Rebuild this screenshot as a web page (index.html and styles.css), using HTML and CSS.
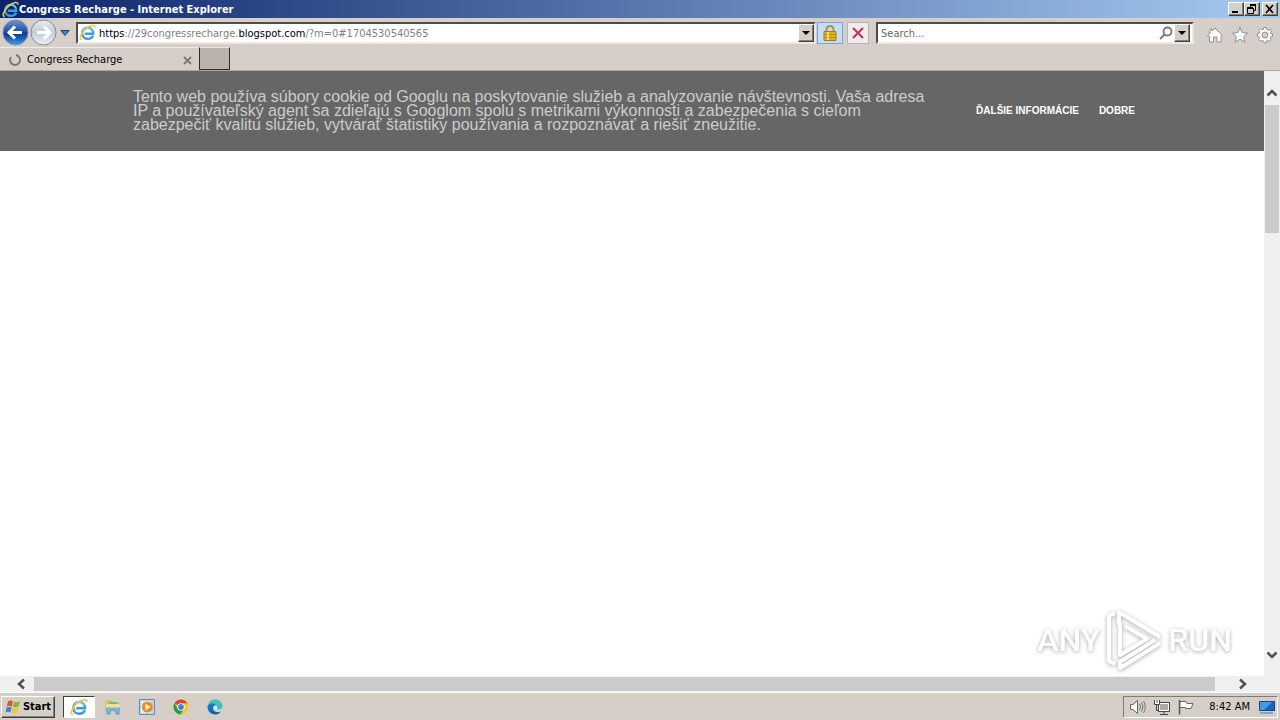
FILE: index.html
```html
<!DOCTYPE html>
<html lang="en">
<head>
<meta charset="utf-8">
<title>Congress Recharge - Internet Explorer</title>
<link rel="stylesheet" href="styles.css">
</head>
<body>
<svg class="defs" aria-hidden="true">
  <defs>
    <linearGradient id="blueBall" x1="0" y1="0" x2="0" y2="1"><stop offset="0" stop-color="#6d94d2"/><stop offset=".48" stop-color="#1d4da8"/><stop offset=".55" stop-color="#0c3a94"/><stop offset="1" stop-color="#37a2ee"/></linearGradient>
    <linearGradient id="greyBall" x1="0" y1="0" x2="0" y2="1"><stop offset="0" stop-color="#e9edf2"/><stop offset=".5" stop-color="#c3cbd6"/><stop offset="1" stop-color="#eef2f7"/></linearGradient>
    <linearGradient id="edgeFill" x1="0" y1="0" x2="1" y2="1"><stop offset="0" stop-color="#1683d8"/><stop offset="1" stop-color="#0c4fa0"/></linearGradient>
    <symbol id="ie" viewBox="0 0 16 16">
      <path d="M13.300 11C12.300 13 10.600 14 8.300 14C5.100 14 3 11.800 3 8.800C3 5.700 5.200 3.500 8.400 3.500C11.600 3.500 13.500 5.800 13.400 9.200H5.500" fill="none" stroke="#3a9ce0" stroke-width="2.200"/>
      <path d="M3.600 7C4.500 4.800 6 3.600 8.400 3.500C10.800 3.500 12.400 4.700 13 6.500" fill="none" stroke="#8fd3f7" stroke-width="1.100"/>
      <path d="M2.600 14.700C-.500 14.700 1.700 8.700 6.500 4.600C10.700 1 15.200 .100 15 3.500" fill="none" stroke="#f1c63a" stroke-width="1.500"/>
    </symbol>
  </defs>
</svg>

<header class="titlebar">
  <svg class="title-icon" viewBox="0 0 16 16"><use href="#ie"/></svg>
  <h1 class="title-text">Congress Recharge - Internet Explorer</h1>
  <div class="window-buttons">
    <button class="bevel win-btn" aria-label="Minimize"><svg viewBox="0 0 12 10"><path d="M2 8H8" stroke="#000" stroke-width="2"/></svg></button>
    <button class="bevel win-btn" aria-label="Restore"><svg viewBox="0 0 12 10"><path d="M4 1H10M1 4H7" stroke="#000" stroke-width="2"/><path d="M4.500 2V4M9.500 1V6.500H7.500M1.500 4V9.500H7.500V4" fill="none" stroke="#000"/></svg></button>
    <button class="bevel win-btn win-close" aria-label="Close"><svg viewBox="0 0 12 10"><path d="M2 1L9 9M9 1L2 9" stroke="#000" stroke-width="1.700"/></svg></button>
  </div>
</header>

<nav class="navbar">
  <div class="history">
    <button class="plain" aria-label="Back"><svg class="ball" viewBox="0 0 27 27"><circle cx="13.500" cy="13.500" r="12.500" fill="url(#blueBall)" stroke="#7b8ba5"/><path d="M20 13.500H7.500M13 7.500L7 13.500L13 19.500" fill="none" stroke="#fff" stroke-width="3"/></svg></button>
    <button class="plain" aria-label="Forward"><svg class="ball" viewBox="0 0 27 27"><circle cx="13.500" cy="13.500" r="12.500" fill="url(#greyBall)" stroke="#858b94"/><path d="M7 13.500H19.500M14 7.500L20 13.500L14 19.500" fill="none" stroke="#fff" stroke-width="3"/></svg></button>
    <button class="plain recent" aria-label="Recent pages"><svg viewBox="0 0 10 8"><path d="M.800 1.500H9.200L5 6.500Z" fill="#3a87c4" stroke="#15446f"/></svg></button>
  </div>
  <div class="field address">
    <svg class="field-icon" viewBox="0 0 16 16"><use href="#ie"/></svg>
    <div class="url" role="textbox" aria-label="Address" contenteditable="true" spellcheck="false"><b>https</b>://29congressrecharge.<b>blogspot.com</b>/?m=0#1704530540565</div>
    <button class="bevel drop" aria-label="Show addresses"><svg viewBox="0 0 8 4"><path d="M0 0H8L4 4Z"/></svg></button>
  </div>
  <button class="tool lock" aria-label="Security report"><svg viewBox="0 0 16 18"><path d="M4.500 9V5.500C4.500 .800 11.500 .800 11.500 5.500V9" fill="none" stroke="#a79558" stroke-width="2"/><path d="M2 7.500H14V16.500H2Z" fill="#e5b020" stroke="#a87910"/><path d="M2.500 10.500H13.500M2.500 13.500H13.500" stroke="#b9830b"/><path d="M5 8H7V16H5Z" fill="#f7d765"/></svg></button>
  <button class="tool stop" aria-label="Stop"><svg viewBox="0 0 16 18"><path d="M3 4L13 14M13 4L3 14" stroke="#c33342" stroke-width="2"/></svg></button>
  <div class="field search">
    <input class="search-input" type="text" placeholder="Search..." aria-label="Search">
    <button class="plain magnifier" aria-label="Go"><svg viewBox="0 0 14 14"><circle cx="8.500" cy="5.500" r="4" fill="none" stroke="#777" stroke-width="1.800"/><path d="M5.500 8.500L1 13" stroke="#777" stroke-width="2"/></svg></button>
    <button class="bevel drop" aria-label="Search providers"><svg viewBox="0 0 8 4"><path d="M0 0H8L4 4Z"/></svg></button>
  </div>
  <div class="commands">
    <button class="plain" aria-label="Home"><svg viewBox="0 0 18 18"><path d="M9 2L16.500 9.500L15 10.500V16H11V11H7.500V16H3.500V10.500L1.500 9.500L4 7V3H6V5Z" fill="#fff" stroke="#8f8f8f"/></svg></button>
    <button class="plain" aria-label="Favorites"><svg viewBox="0 0 18 18"><path d="M9 1.500L11.200 6.700L16.700 7.100L12.500 10.700L13.900 16.200L9 13.200L4.100 16.200L5.500 10.700L1.300 7.100L6.800 6.700Z" fill="#fff" stroke="#8f8f8f"/></svg></button>
    <button class="plain" aria-label="Tools"><svg viewBox="0 0 18 18"><path d="M7.700 1.500H10.300L10.700 3.500L12.300 4.200L14 3.200L15.500 5L14.400 6.600L15 8H16.500V10.500L14.800 10.800L14.200 12.200L15.200 13.800L13.500 15.500L12 14.400L10.500 15L10.200 16.700H7.800L7.400 15L5.900 14.400L4.300 15.400L2.600 13.700L3.600 12.200L3 10.700L1.400 10.300V7.900L3.100 7.500L3.700 6L2.700 4.500L4.400 2.800L5.900 3.800L7.400 3.200Z" fill="#fff" stroke="#8f8f8f"/><circle cx="9" cy="9" r="3" fill="#d4d0c8" stroke="#8f8f8f"/></svg></button>
  </div>
</nav>

<div class="tabs">
  <div class="tab">
    <svg class="spinner" viewBox="0 0 14 14"><path d="M8 2A5 5 0 1 1 3 4" fill="none" stroke="#777" stroke-width="2"/></svg>
    <span class="tab-name">Congress Recharge</span>
    <button class="plain tab-close" aria-label="Close tab"><svg viewBox="0 0 9 9"><path d="M1 1L8 8M8 1L1 8" stroke="#777" stroke-width="1.800"/></svg></button>
  </div>
  <button class="new-tab" aria-label="New tab"></button>
</div>

<div class="viewport">
  <main class="page" lang="sk">
    <section class="cookies">
      <p class="cookie-text">Tento web používa súbory cookie od Googlu na poskytovanie služieb a analyzovanie návštevnosti. Vaša adresa IP a používateľský agent sa zdieľajú s Googlom spolu s metrikami výkonnosti a zabezpečenia s cieľom zabezpečiť kvalitu služieb, vytvárať štatistiky používania a rozpoznávať a riešiť zneužitie.</p>
      <div class="cookie-links"><a href="#info">ĎALŠIE INFORMÁCIE</a><a href="#ok">DOBRE</a></div>
    </section>
    <div class="watermark">
      <span>ANY</span>
      <svg viewBox="0 0 58 64"><g fill="none" stroke="#fff" stroke-width="4" stroke-linejoin="round"><path d="M10 5L4 8V53L10 56"/><path d="M15 14V47L42 31L20 18"/><path d="M14 18V4L55 29"/><path d="M55 35L15 60V54L50 32"/></g></svg>
      <span>RUN</span>
    </div>
  </main>
  <div class="vscroll">
    <button class="plain arrow-v" aria-label="Scroll up"><svg viewBox="0 0 12 10"><path d="M1.500 7.500L6 3L10.500 7.500" fill="none" stroke="#505050" stroke-width="2.500"/></svg></button>
    <div class="vtrack"><div class="vthumb"></div></div>
    <button class="plain arrow-v" aria-label="Scroll down"><svg viewBox="0 0 12 10"><path d="M1.500 2.500L6 7L10.500 2.500" fill="none" stroke="#505050" stroke-width="2.500"/></svg></button>
  </div>
  <div class="hscroll">
    <button class="plain arrow-h" aria-label="Scroll left"><svg viewBox="0 0 10 12"><path d="M8 1.500L3 6L8 10.500" fill="none" stroke="#505050" stroke-width="2.500"/></svg></button>
    <div class="hthumb"></div>
    <button class="plain arrow-h" aria-label="Scroll right"><svg viewBox="0 0 10 12"><path d="M2 1.500L7 6L2 10.500" fill="none" stroke="#505050" stroke-width="2.500"/></svg></button>
  </div>
  <div class="corner"></div>
</div>

<footer class="taskbar">
  <button class="bevel start"><svg viewBox="0 0 17 16"><path d="M3 2.500Q5.500 .500 8 2.300L6.800 7.500Q4.300 6 1.800 7.500Z" fill="#e65125"/><path d="M9 2.500Q11.500 4 15 2.300L13.700 7.500Q11 9 7.900 7.600Z" fill="#80b93b"/><path d="M1.500 8.500Q4 7 6.600 8.500L5.400 13.500Q3 12 .500 13.500Z" fill="#318bd2"/><path d="M7.600 8.600Q10.500 10 13.500 8.500L12.200 13.500Q9.300 15.500 6.400 13.700Z" fill="#f6c62f"/></svg>Start</button>
  <div class="apps">
    <button class="app active" aria-label="Internet Explorer"><svg viewBox="0 0 16 16"><use href="#ie"/></svg></button>
    <button class="app" aria-label="Explorer"><svg viewBox="0 0 16 16"><path d="M1 2H6L7 4H14V12H1Z" fill="#efd583" stroke="#d3ad52"/><path d="M3 4H12" stroke="#62b979" stroke-width="1.500"/><path d="M2 8H14V15H11V11H5V15H2Z" fill="#79bce4" stroke="#549bc7"/><path d="M1 7H15" stroke="#f6e39b" stroke-width="3"/></svg></button>
    <button class="app" aria-label="Media Player"><svg viewBox="0 0 16 16"><path d="M.500 .500H15.500V15.500H.500Z" fill="#b9d5ed" stroke="#5b91c2"/><path d="M2 2H12V14H2Z" fill="#e6f2fb"/><circle cx="8.300" cy="8" r="5.500" fill="#f28b1c"/><path d="M6.500 4.800L11.500 8L6.500 11.200Z" fill="#fff"/></svg></button>
    <button class="app" aria-label="Chrome"><svg viewBox="0 0 16 16"><circle cx="8" cy="8" r="7.500" fill="#f7c927"/><path d="M8 8L1.500 4.200A7.500 7.500 0 0 1 14.500 4.300L8 4.500Z" fill="#dc4132"/><path d="M1.500 4.200A7.500 7.500 0 0 0 7.500 15.500L11 9.700L8 8L5 9.700Z" fill="#269b50"/><circle cx="8" cy="8" r="3.800" fill="#fff"/><circle cx="8" cy="8" r="2.900" fill="#417fe5"/></svg></button>
    <button class="app" aria-label="Edge"><svg viewBox="0 0 16 16"><path d="M.500 8A7.500 7.500 0 0 1 15.500 7.500C15.500 10.500 12 11.500 9.500 10.500C10.500 9.500 10.500 6.500 7.500 6C4 5.500 1 7 .500 9Z" fill="#43c3b3"/><path d="M.500 8C1 4.500 6 3 9 6.200C7 6 5.500 7.500 6 10C6.600 13 10.500 14 14 12.500A7.500 7.500 0 0 1 .500 8Z" fill="url(#edgeFill)"/><path d="M8.800 6.500C7 7 7 10.500 10.500 11.200C13 11.600 14.500 10.700 15.300 9.500C13.500 11 11 11 9.800 10.300C10.300 9.500 10.400 7.500 8.800 6.500Z" fill="#e4edeb"/></svg></button>
  </div>
  <div class="tray">
    <svg viewBox="0 0 18 16"><path d="M1.500 5.500H4L8.500 1.500V14.500L4 10.500H1.500Z" fill="#fff" stroke="#666"/><path d="M10.500 5Q12.500 8 10.500 11M12.500 3.500Q15.500 8 12.500 12.500M14.500 2Q18 8 14.500 14" fill="none" stroke="#777"/></svg>
    <svg viewBox="0 0 18 16"><path d="M5.500 3.500H16.500V12.500H5.500Z" fill="#fff" stroke="#444"/><path d="M7 5H15V11H7Z" fill="#aaa"/><path d="M11 13V15M7 15.500H15M3.500 6V11.500H5" fill="none" stroke="#444"/><path d="M1.500 1V5.500H6.500V1M4 1V4" fill="#fff" stroke="#444"/></svg>
    <svg viewBox="0 0 18 16"><path d="M2.500 1V15.500" stroke="#555" stroke-width="1.500"/><path d="M3 2.500H9L10 4.500H16L14 9.500H8.500V8.500H3Z" fill="#fff" stroke="#666"/></svg>
    <time class="clock">8:42 AM</time>
    <svg viewBox="0 0 18 16"><path d="M1.500 2.500H16.500V11.500H1.500Z" fill="#1765bd" stroke="#154680"/><path d="M2 3H14L6 11H2Z" fill="#4599e5"/><path d="M2 14H15" stroke="#85a5c5" stroke-width="2"/></svg>
  </div>
</footer>
</body>
</html>
```
FILE: styles.css
```css
* { box-sizing: border-box; }
body {
  margin: 0;
  height: 100vh;
  display: flex;
  flex-direction: column;
  overflow: hidden;
  background: #d6cfc9;
  color: #000;
  font: 11px/14px Tahoma, "DejaVu Sans Condensed", "DejaVu Sans", sans-serif;
}
button { font: inherit; color: inherit; padding: 0; margin: 0; border-radius: 0; }
svg { display: block; }
.defs { position: absolute; width: 0; height: 0; }
.plain { border: 0; background: none; }
.bevel {
  display: flex;
  align-items: center;
  justify-content: center;
  background: #d4d0c8;
  border: 1px solid;
  border-color: #fff #404040 #404040 #fff;
  box-shadow: inset -1px -1px #858078;
}

.titlebar {
  display: flex;
  align-items: center;
  height: 18px;
  flex: none;
  padding: 0 2px;
  background: linear-gradient(90deg, #0a246a, #a6caf0);
}
.title-icon { width: 17px; height: 17px; }
.title-text { flex: 1; margin: 0; padding-top: 2px; font-size: 11px; font-weight: bold; color: #fff; }
.window-buttons { display: flex; }
.win-btn { width: 16px; height: 14px; }
.win-btn svg { width: 12px; height: 10px; }
.win-close { margin-left: 2px; }

.navbar { display: flex; align-items: center; height: 29px; flex: none; padding: 0 6px 0 2px; }
.history { display: flex; align-items: center; width: 74px; gap: 1px; }
.ball { width: 27px; height: 27px; }
.recent { margin-left: 2px; }
.recent svg { width: 10px; height: 8px; }
.field {
  display: flex;
  align-items: center;
  height: 22px;
  background: #fff;
  border: 2px solid;
  border-color: #514b49 #ece7e2 #ece7e2 #514b49;
}
.address { flex: 1; }
.field-icon { width: 17px; height: 17px; margin: 0 3px 0 1px; }
.url { flex: 1; padding-top: 2px; color: #808080; white-space: nowrap; outline: 0; }
.url b { font-weight: normal; color: #000; }
.drop { width: 16px; height: 18px; }
.drop svg { width: 8px; height: 4px; }
.tool { display: flex; align-items: center; justify-content: center; height: 22px; border: 1px solid; }
.tool svg { width: 16px; height: 18px; }
.lock { width: 26px; margin-left: 1px; background: #c5ddf7; border-color: #71a5dc; }
.stop { width: 22px; margin: 0 7px 0 4px; background: #eeeaf0; border-color: #b7b1b4; }
.search { width: 318px; padding-right: 2px; }
.search-input { flex: 1; min-width: 0; border: 0; padding: 2px 3px 0; background: none; font: inherit; outline: 0; }
.search-input::placeholder { color: #686868; opacity: 1; }
.magnifier { margin-right: 1px; }
.magnifier svg { width: 14px; height: 14px; }
.commands { display: flex; gap: 7px; margin-left: 12px; padding-top: 4px; }
.commands svg { width: 18px; height: 18px; }

.tabs { display: flex; height: 24px; flex: none; border-bottom: 1px solid #aaa8a3; }
.tab { display: flex; align-items: center; width: 199px; padding: 2px 7px 0 8px; border-top: 1px solid #eeeae5; }
.spinner { width: 14px; height: 14px; margin-right: 5px; }
.tab-name { flex: 1; }
.tab-close svg { width: 9px; height: 9px; }
.new-tab { width: 31px; height: 23px; background: #bbb1ad; border: 1px solid; border-color: #e9e4df #2c2c2c #2c2c2c #2c2c2c; }

.viewport { flex: 1; min-height: 0; display: grid; grid-template: 1fr 16px / 1fr 16px; background: #f0f0f0; }
.page { position: relative; background: #fff; overflow: hidden; }
.cookies {
  display: flex;
  align-items: center;
  min-height: 80px;
  padding: 0 129px 0 133px;
  background: #666;
  color: #ccc;
  font-family: Arial, "Liberation Sans", sans-serif;
}
.cookie-text { flex: 1; margin: 0; max-width: 804px; font-size: 16px; line-height: 14px; }
.cookie-links { display: flex; gap: 20px; margin-left: auto; font-size: 10px; font-weight: bold; white-space: nowrap; }
.cookie-links a { color: #fff; text-decoration: none; }
.watermark {
  position: absolute;
  right: 32px;
  bottom: 4px;
  display: flex;
  align-items: center;
  gap: 5px;
  color: #fff;
  font: 500 32px/40px Roboto, "Liberation Sans", sans-serif;
  filter: drop-shadow(0 1px 2px #aaa);
}
.watermark svg { width: 58px; height: 64px; }

.vscroll { display: flex; flex-direction: column; padding: 17px 1px 16px; }
.arrow-v { height: 10px; display: flex; justify-content: center; }
.arrow-v svg { width: 12px; height: 10px; }
.vtrack { flex: 1; padding-top: 7px; }
.vthumb { height: 23.5%; background: #cbcbcb; }
.hscroll { display: flex; padding: 1px 16px; }
.arrow-h { width: 10px; display: flex; align-items: center; }
.arrow-h svg { width: 10px; height: 12px; }
.hthumb { flex: 1; margin: 0 23px 0 8px; background: #cbcbcb; }

.taskbar { display: flex; align-items: center; height: 28px; flex: none; padding: 1px 2px 0 1px; border-top: 1px solid #fff; background: #d6cfc7; }
.start { gap: 1px; width: 54px; height: 22px; font-weight: bold; }
.start svg { width: 17px; height: 16px; }
.apps { display: flex; gap: 2px; flex: 1; margin-left: 8px; }
.app { display: flex; align-items: center; justify-content: center; width: 32px; height: 22px; border: 1px solid transparent; background: none; }
.app svg { width: 16px; height: 16px; }
.active { background: #fff; border-color: #404040 #fff #fff #404040; }
.active svg { width: 18px; height: 18px; }
.tray { display: flex; align-items: center; gap: 6px; height: 22px; padding: 0 1px 0 5px; border: 1px solid; border-color: #807b75 #fff #fff #807b75; }
.tray svg { width: 18px; height: 16px; }
.clock { margin: 0 2px 0 8px; white-space: nowrap; }
```
